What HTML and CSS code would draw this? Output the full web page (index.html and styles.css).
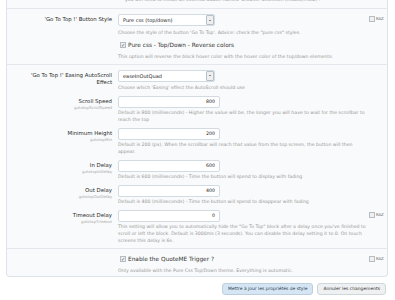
FILE: index.html
```html
<!DOCTYPE html>
<html lang="fr">
<head>
  <meta charset="UTF-8">
  <title>Go To Top - Options</title>
  <link rel="stylesheet" href="styles.css">
</head>
<body>
  <div class="page">
    <form class="options">
      <div class="group group-top">
        <p class="explain">you will need to install an external addon named 'browser detection (mobile/MSIE)'.</p>
      </div>

      <div class="group">
        <div class="row">
          <label class="label">'Go To Top !' Button Style</label>
          <div class="control">
            <span class="select">Pure css (top/down)<span class="arrow"></span></span>
            <p class="explain">Choose the style of the button 'Go To Top'. Advice: check the "pure css" styles.</p>
            <div class="check-line"><span class="box checked">&#10003;</span>Pure css - Top/Down - Reverse colors</div>
            <p class="explain">This option will reverse the block hover color with the hover color of the top/down elements.</p>
          </div>
          <div class="raz"><span class="box"></span>RAZ</div>
        </div>
      </div>

      <div class="group">
        <div class="row">
          <label class="label label-wrap">'Go To Top !' Easing AutoScroll Effect</label>
          <div class="control">
            <span class="select">easeInOutQuad<span class="arrow"></span></span>
            <p class="explain">Choose which 'Easing' effect the AutoScroll should use</p>
          </div>
        </div>
        <div class="row">
          <label class="label">Scroll Speed<span class="hint">gototopScrollSpeed</span></label>
          <div class="control">
            <span class="input">800</span>
            <p class="explain">Default is 800 (milliseconds) - Higher the value will be, the longer you will have to wait for the scrollbar to reach the top</p>
          </div>
        </div>
        <div class="row">
          <label class="label">Minimum Height<span class="hint">gototopMin</span></label>
          <div class="control">
            <span class="input">200</span>
            <p class="explain">Default is 200 (px). When the scrollbar will reach that value from the top screen, the button will then appear.</p>
          </div>
        </div>
        <div class="row">
          <label class="label">In Delay<span class="hint">gototopInDelay</span></label>
          <div class="control">
            <span class="input">600</span>
            <p class="explain">Default is 600 (milliseconds) - Time the button will spend to display with fading</p>
          </div>
        </div>
        <div class="row">
          <label class="label">Out Delay<span class="hint">gototopOutDelay</span></label>
          <div class="control">
            <span class="input">400</span>
            <p class="explain">Default is 400 (milliseconds) - Time the button will spend to disappear with fading</p>
          </div>
        </div>
        <div class="row">
          <label class="label">Timeout Delay<span class="hint">gototopTimeout</span></label>
          <div class="control">
            <span class="input">0</span>
            <p class="explain">This setting will allow you to automatically hide the "Go To Top" block after a delay once you've finished to scroll or left the block. Default is 3000ms (3 seconds). You can disable this delay setting it to 0. On touch screens this delay is 6s.</p>
          </div>
          <div class="raz"><span class="box"></span>RAZ</div>
        </div>
      </div>

      <div class="group group-last">
        <div class="row">
          <span class="label"></span>
          <div class="control">
            <div class="check-line"><span class="box checked">&#10003;</span>Enable the QuoteME Trigger ?</div>
            <p class="explain explain-after-check">Only available with the Pure Css Top/Down theme. Everything is automatic.</p>
          </div>
          <div class="raz"><span class="box"></span>RAZ</div>
        </div>
      </div>
    </form>

    <div class="actions">
      <button type="button" class="btn primary">Mettre à jour les propriétés de style</button>
      <button type="button" class="btn">Annuler les changements</button>
    </div>
  </div>
</body>
</html>
```

FILE: styles.css
```css
body {
  margin: 0;
  background: #fff;
  font-family: "DejaVu Sans", Verdana, sans-serif;
  color: #222;
}
.page {
  padding: 0 7px 0 6px;
  margin-top: -4px;
}
.options {
  background: #f9fafb;
  border: 1px solid #dce4ea;
  border-top: none;
  border-radius: 0 0 4px 4px;
}
.group {
  border-bottom: 1px solid #e4e8ec;
  padding: 5px 0 4px;
}
.group-top {
  padding: 0 0 5px 118px;
}
.group-last {
  border-bottom: none;
  padding: 5px 0 2.5px;
}
.row {
  display: grid;
  grid-template-columns: 111px 251px 1fr;
  margin-bottom: 4.5px;
}
.row:last-child {
  margin-bottom: 0;
}
.label {
  text-align: right;
  font-size: 5.4px;
  line-height: 7.5px;
  padding: 2.25px 6px 0 0;
  color: #2a2a2a;
}
.label-wrap {
  padding-left: 18px;
}
.hint {
  display: block;
  font-size: 3.9px;
  line-height: 5px;
  color: #a8a8a8;
}
.control {
  min-width: 0;
}
.explain {
  margin: 1.5px 0 0;
  font-size: 4.65px;
  line-height: 7px;
  color: #989898;
}
.group-top .explain {
  margin: 0;
}
.select, .input {
  display: block;
  box-sizing: border-box;
  height: 12px;
  background: #fff;
  border: 1px solid #d3dbe2;
  border-radius: 2px;
  font-size: 5px;
  line-height: 10px;
  padding: 0 4px;
  color: #222;
  position: relative;
}
.select {
  width: 97px;
}
.select + .explain {
  margin-top: 2.5px;
}
.input {
  width: 102px;
  text-align: right;
  font-size: 4.7px;
}
.arrow {
  position: absolute;
  right: 0;
  top: 0;
  width: 8px;
  height: 10px;
  background: #eceef0;
  border: 1px solid #b9c1c8;
  border-radius: 1px;
  box-sizing: border-box;
}
.arrow::after {
  content: "";
  position: absolute;
  left: 1.5px;
  top: 3.5px;
  border-left: 1.5px solid transparent;
  border-right: 1.5px solid transparent;
  border-top: 1.5px solid #222;
}
.check-line {
  display: flex;
  align-items: center;
  font-size: 5.8px;
  line-height: 10px;
  height: 10px;
  color: #333;
  margin-top: 4.5px;
}
.group-last .check-line {
  margin-top: 0;
}
.check-line + .explain {
  margin-top: 2.5px;
}
.explain-after-check {
  margin-top: 3.5px;
}
.box {
  display: inline-block;
  box-sizing: border-box;
  flex: none;
  width: 6px;
  height: 6px;
  border: 1px solid #b5bcc3;
  background: #eef0f2;
  font-size: 5px;
  line-height: 4px;
  text-align: center;
  color: #556;
  margin-right: 1px;
}
.check-line .box {
  margin: 0 2px 0 2px;
}
.raz {
  display: flex;
  align-items: center;
  align-self: start;
  margin-top: 2px;
  font-size: 3.8px;
  line-height: 6px;
  color: #555;
}
.actions {
  display: flex;
  justify-content: flex-end;
  gap: 4px;
  padding: 5.5px 2px 0 0;
}
.btn {
  font-family: "DejaVu Sans", Verdana, sans-serif;
  font-size: 4.45px;
  height: 12px;
  padding: 0 5px;
  border: 1px solid #cfd6dc;
  border-radius: 3px;
  background: #eef0f2;
  color: #333;
}
.btn.primary {
  background: #d5e5f3;
  border-color: #bdcedd;
  color: #2c3e50;
}
```
